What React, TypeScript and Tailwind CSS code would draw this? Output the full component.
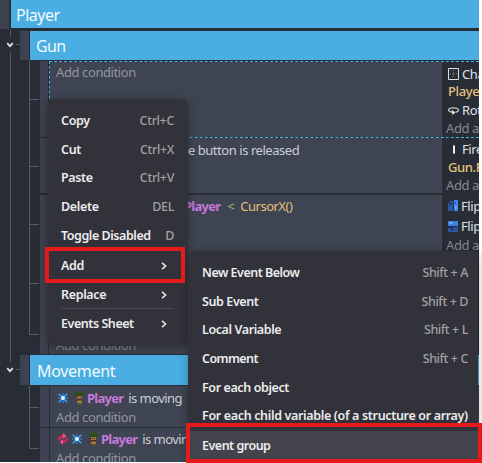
import type { ReactNode } from "react";

function Chevron({ dir }: { dir: "down" | "right" }) {
  return dir === "down" ? (
    <svg width="8" height="6" viewBox="0 0 8 6" fill="none" stroke="#e6e6e6" strokeWidth="1.7">
      <path d="M1.2 1.2 4 4.2 6.8 1.2" />
    </svg>
  ) : (
    <svg width="6" height="8" viewBox="0 0 6 8" fill="none" stroke="#e6e6e6" strokeWidth="1.6">
      <path d="M1 .8 4.6 4 1 7.2" />
    </svg>
  );
}

function Soldier() {
  return (
    <svg className="shrink-0" width="9" height="14" viewBox="0 0 9 14" shapeRendering="crispEdges">
      <path fill="#2c4a1c" d="M2 0h5v1h1v2h1v2H0V3h1V1h1z" />
      <path fill="#3f5a26" d="M3 1h3v1H3z" />
      <path fill="#a96d42" d="M2 5h5v4H2z" />
      <path fill="#4a2d22" d="M3 6h1v1H3zM5 6h1v1H5zM2 8h5v1H2z" />
      <path fill="#8a552b" d="M3 9h3v1H3z" />
      <path fill="#a77a35" d="M2 10h5v2H2z" />
      <path fill="#5f6b30" d="M3 12h1v2H3zM5 12h1v2H5z" />
    </svg>
  );
}

function Move() {
  return (
    <svg className="shrink-0" width="10" height="10" viewBox="0 0 10 10">
      <path stroke="#35a8f5" strokeWidth="1.6" d="M.8.8l8.4 8.4M9.2.8.8 9.2" />
      <path stroke="#2b7ad8" strokeWidth="1.4" d="M5 0v10M0 5h10" />
      <circle cx="5" cy="5" r="1.9" fill="#f4fbff" />
    </svg>
  );
}

function Invert() {
  return (
    <svg className="shrink-0" width="10" height="12" viewBox="0 0 10 12" fill="none">
      <path stroke="#e0245a" strokeWidth="2.2" d="M1.4 7.500V5L3.600 3.200H5M8.600 4.500V7L6.400 8.800H5" />
      <path fill="#f5507f" d="M5 0l3.200 3L5 6zM5 6v6L1.800 9z" />
    </svg>
  );
}

function ObjectName({ children }: { children: ReactNode }) {
  return <span className="font-bold text-[#c678dd] tracking-[-0.75px]">{children}</span>;
}

function Actions({ children, className }: { children: ReactNode; className: string }) {
  return (
    <div className={`w-[38px] shrink-0 overflow-hidden whitespace-nowrap border-l border-[#4a4a4c] bg-[#282c34] pl-[6px] text-[#dfe2ea] ${className}`}>
      {children}
    </div>
  );
}

function AddAction() {
  return <div className="-ml-[2px] h-[18px] text-[#858994]">Add action</div>;
}

function Flip({ vertical }: { vertical?: boolean }) {
  return (
    <svg className="mr-[3px] shrink-0" width="10" height="11" viewBox="0 0 10 11" shapeRendering="crispEdges">
      {vertical ? (
        <>
          <path fill="#3f7ee0" d="M0 0h10v5H0z" />
          <path fill="#6ca3fa" d="M1 1h4v2H1z" />
          <path fill="#16305f" d="M0 5h6v1H0zM3 6h2v2H3z" />
          <path fill="#2b569e" d="M0 7h3v4H0zM5 6h5v5H3V9h2z" />
        </>
      ) : (
        <>
          <path fill="#2b569e" d="M0 3h2V1h3v10H0z" />
          <path fill="#16305f" d="M2 3h2v2H2zM5 0h1v11H5z" />
          <path fill="#4386f2" d="M6 0h4v11H6z" />
          <path fill="#6ca3fa" d="M7 6h2v3H7z" />
          <path fill="#1f4587" d="M7 2h1v2H7z" />
        </>
      )}
    </svg>
  );
}

function GroupHeader({ title, className }: { title: string; className: string }) {
  return (
    <div className="flex">
      <div className="mr-px w-[9px] bg-[#3e4250]" />
      <div className={`flex flex-1 bg-[#4aaee3] text-[16px] text-[#f3faff] ${className}`}>{title}</div>
    </div>
  );
}

function Branch({ className }: { className: string }) {
  return <div className={`w-[10px] border-b border-l border-[#555a63] ${className}`} />;
}

function MenuItem({ label, keys, sub, className = "", labelClass = "" }: { label: string; keys?: string; sub?: boolean; className?: string; labelClass?: string }) {
  return (
    <div className={`flex items-center justify-between whitespace-nowrap text-[#ececee] ${className}`}>
      <span className={labelClass}>{label}</span>
      {keys && <span className="font-medium text-[#a0a0a4]">{keys}</span>}
      {sub && <span className="mr-[7px]"><Chevron dir="right" /></span>}
    </div>
  );
}

export default function App() {
  return (
    <div className="relative h-[463px] w-[482px] overflow-hidden bg-white font-['Noto_Sans','Open_Sans',sans-serif]">
      <div className="h-[462px] w-[479px] overflow-hidden bg-[#282c34] text-[13px] leading-[18px] tracking-[-0.4px] text-[#cbced4]">
        <div className="flex h-[30px]">
          <div className="h-[29px] w-[9px] bg-[#3e4250]" />
          <div className="ml-[2px] h-[28px] flex-1 bg-[#4aaee3] pl-[5px] pt-[5px] text-[16px] leading-[20px] tracking-[-0.5px] text-[#f3faff]">Player</div>
        </div>
        <div className="flex">
          <div className="flex w-[20px] shrink-0 flex-col">
            <div className="ml-[10px] h-[7px] w-px bg-[#555a63]" />
            <div className="flex h-[15px] items-center justify-between pl-[6px]"><Chevron dir="down" /><i className="h-px w-[4px] bg-[#555a63]" /></div>
            <div className="ml-[10px] h-[310px] w-px bg-[#555a63]" />
            <div className="flex h-[15px] items-center justify-between pl-[6px]"><Chevron dir="down" /><i className="h-px w-[4px] bg-[#555a63]" /></div>
          </div>
          <div className="flex-1 overflow-hidden">
            <div className="pt-px">
              <GroupHeader title="Gun" className="h-[29px] pl-[6px] pt-[5px] leading-[20px] tracking-[-0.6px]" />
            </div>
            <div className="flex h-[295px] pl-[9px] pt-px">
              <div className="w-[11px] shrink-0">
                <Branch className="h-[39px]" />
                <Branch className="h-[67px]" />
                <Branch className="h-[58px]" />
                <Branch className="h-[59px]" />
                <Branch className="h-[51px]" />
              </div>
              <div className="flex-1">
                <div className="flex h-[77px]">
                  <div className="mr-px h-[76px] w-[8px] bg-[#3e4250]" />
                  <div className="flex flex-1 border border-r-0 border-dashed border-[#4aaee3]">
                    <div className="flex-1 bg-[#3e4451] pl-[6px] pt-px text-[#9296a0]">Add condition</div>
                    <Actions className="h-[75px]">
                      <div className="flex h-[20px] items-center pt-[3px]">
                        <svg className="mr-[3px] shrink-0" width="11" height="12" viewBox="0 0 11 12" fill="none"><path stroke="#dedede" d="M.5.5h10v11H.5z" /><path stroke="#777" strokeDasharray="1 1" d="M5.5 2v8M2 6h7" /></svg>
                        Change
                      </div>
                      <div className="h-[18px] font-medium text-[#e5c07b]">Player.X</div>
                      <div className="flex h-[19px] items-center">
                        <svg className="mr-[3px] shrink-0" width="11" height="10" viewBox="0 0 11 10" fill="none"><path stroke="#c6c6c6" strokeWidth="1.3" d="M4 7.200C-1 6.500-.5 2.800 5.500 2.800s6.500 3.700 2 4.400" /><path fill="#eee" d="M3.500 5l4 2.300-3 2.700z" /></svg>
                        Rotate
                      </div>
                      <AddAction />
                    </Actions>
                  </div>
                </div>
                <div className="flex h-[55px]">
                  <div className="mr-px w-[8px] bg-[#3e4250]" />
                  <div className="flex-1 bg-[#3e4451] pl-[82px] pt-[3px] tracking-[-0.45px]">Left mouse button is released</div>
                  <Actions className="pt-[2px]">
                    <div className="flex h-[18px] items-center">
                      <svg className="mr-[3px] shrink-0" width="11" height="11" viewBox="0 0 11 11" shapeRendering="crispEdges"><path fill="#eee" d="M5 2h2v7H5z" /><path fill="#999" d="M5 1h2v1H5zM5 9h2v1H5z" /></svg>
                      Fire
                    </div>
                    <div className="h-[18px] font-medium text-[#e5c07b]">Gun.Player</div>
                    <AddAction />
                  </Actions>
                </div>
                <div className="mt-[2px] flex h-[159px]">
                  <div className="mr-px w-[8px] bg-[#3e4250]" />
                  <div className="flex flex-1 flex-col justify-between bg-[#3e4451]">
                    <div className="pl-[135px] pt-[2px]">
                      <ObjectName>Player</ObjectName><span className="ml-[7px] mr-[6px] text-[#98c379]">&lt;</span><span className="tracking-[-0.5px] text-[#e5c07b]">CursorX()</span>
                    </div>
                    <div className="pl-[7px] text-[#858994]">Add condition</div>
                  </div>
                  <Actions className="">
                    <div className="flex h-[21px] items-center"><Flip />Flip</div>
                    <div className="flex h-[20px] items-center"><Flip vertical />Flip</div>
                    <AddAction />
                  </Actions>
                </div>
              </div>
            </div>
            <GroupHeader title="Movement" className="h-[30px] pl-[7px] pt-[6px] leading-[20px] tracking-[-0.3px]" />
            <div className="flex pl-[9px] pt-px">
              <div className="w-[11px] shrink-0">
                <Branch className="h-[22px]" />
                <Branch className="h-[41px]" />
              </div>
              <div className="flex-1 whitespace-nowrap">
                <div className="flex h-[41px]">
                  <div className="mr-px w-[9px] bg-[#3e4250]" />
                  <div className="flex-1 bg-[#3e4451] pl-[6px] pt-[2px]">
                    <div className="flex h-[20px] items-center"><span className="ml-[2px] mr-[7px]"><Move /></span><span className="mr-[3px]"><Soldier /></span><ObjectName>Player</ObjectName><span className="ml-[5px] tracking-[-0.55px]">is moving</span></div>
                    <div className="text-[#9296a0]">Add condition</div>
                  </div>
                </div>
                <div className="mt-px flex h-[41px]">
                  <div className="mr-px w-[9px] bg-[#3e4250]" />
                  <div className="flex-1 bg-[#3e4451] pl-[6px] pt-px">
                    <div className="flex h-[20px] items-center"><span className="ml-[2px] mr-[4px]"><Invert /></span><span className="mr-[7px]"><Move /></span><span className="mr-[3px]"><Soldier /></span><ObjectName>Player</ObjectName><span className="ml-[5px] tracking-[-0.55px]">is moving</span></div>
                    <div className="text-[#9296a0]">Add condition</div>
                  </div>
                </div>
              </div>
            </div>
          </div>
        </div>
      </div>

      <div className="absolute left-[47px] top-[99px] h-[247px] w-[141px] rounded-[7px] bg-[#32323a] px-[14px] pt-[8px] text-[12.5px] font-semibold tracking-[-0.35px] shadow-[0_2px_10px_rgba(0,0,0,0.3)]">
        <MenuItem label="Copy" keys="Ctrl+C" className="h-[28.6px]" />
        <MenuItem label="Cut" keys="Ctrl+X" className="h-[28.6px]" />
        <MenuItem label="Paste" keys="Ctrl+V" className="h-[28.6px]" />
        <MenuItem label="Delete" keys="DEL" className="h-[28.6px]" />
        <MenuItem label="Toggle Disabled" keys="D" className="h-[29px]" labelClass="tracking-[-0.45px]" />
        <MenuItem label="Add" sub className="h-[32px]" />
        <MenuItem label="Replace" sub className="h-[26px]" />
        <div className="h-px bg-[#4b4b53]" />
        <MenuItem label="Events Sheet" sub className="h-[29px]" labelClass="tracking-[-0.45px]" />
      </div>

      <div className="absolute left-[188px] top-[251px] h-[211px] w-[290px] rounded-tl-[7px] bg-[#32323a] pt-[8px] text-[12.5px] font-semibold tracking-[-0.4px] shadow-[0_2px_10px_rgba(0,0,0,0.3)]">
        <MenuItem label="New Event Below" keys="Shift + A" className="h-[28.7px] px-[14px] pr-[10px]" labelClass="tracking-[-0.5px]" />
        <MenuItem label="Sub Event" keys="Shift + D" className="h-[28.7px] px-[14px] pr-[10px]" />
        <MenuItem label="Local Variable" keys="Shift + L" className="h-[28.7px] px-[14px] pr-[10px]" />
        <MenuItem label="Comment" keys="Shift + C" className="h-[28.7px] px-[14px] pr-[10px]" labelClass="tracking-[-0.6px]" />
        <MenuItem label="For each object" className="h-[28.7px] px-[14px]" />
        <MenuItem label="For each child variable (of a structure or array)" className="h-[28.7px] px-[14px]" labelClass="tracking-[-0.34px]" />
        <MenuItem label="Event group" className="h-[30px] bg-[#44444c] px-[14px]" labelClass="tracking-[-0.5px]" />
      </div>

      <div className="absolute left-[45px] top-[247px] h-[36px] w-[140px] border-4 border-[#e51b1b]" />
      <div className="absolute left-[186px] top-[423px] h-[40px] w-[296px] border-4 border-[#e51b1b]" />
    </div>
  );
}
